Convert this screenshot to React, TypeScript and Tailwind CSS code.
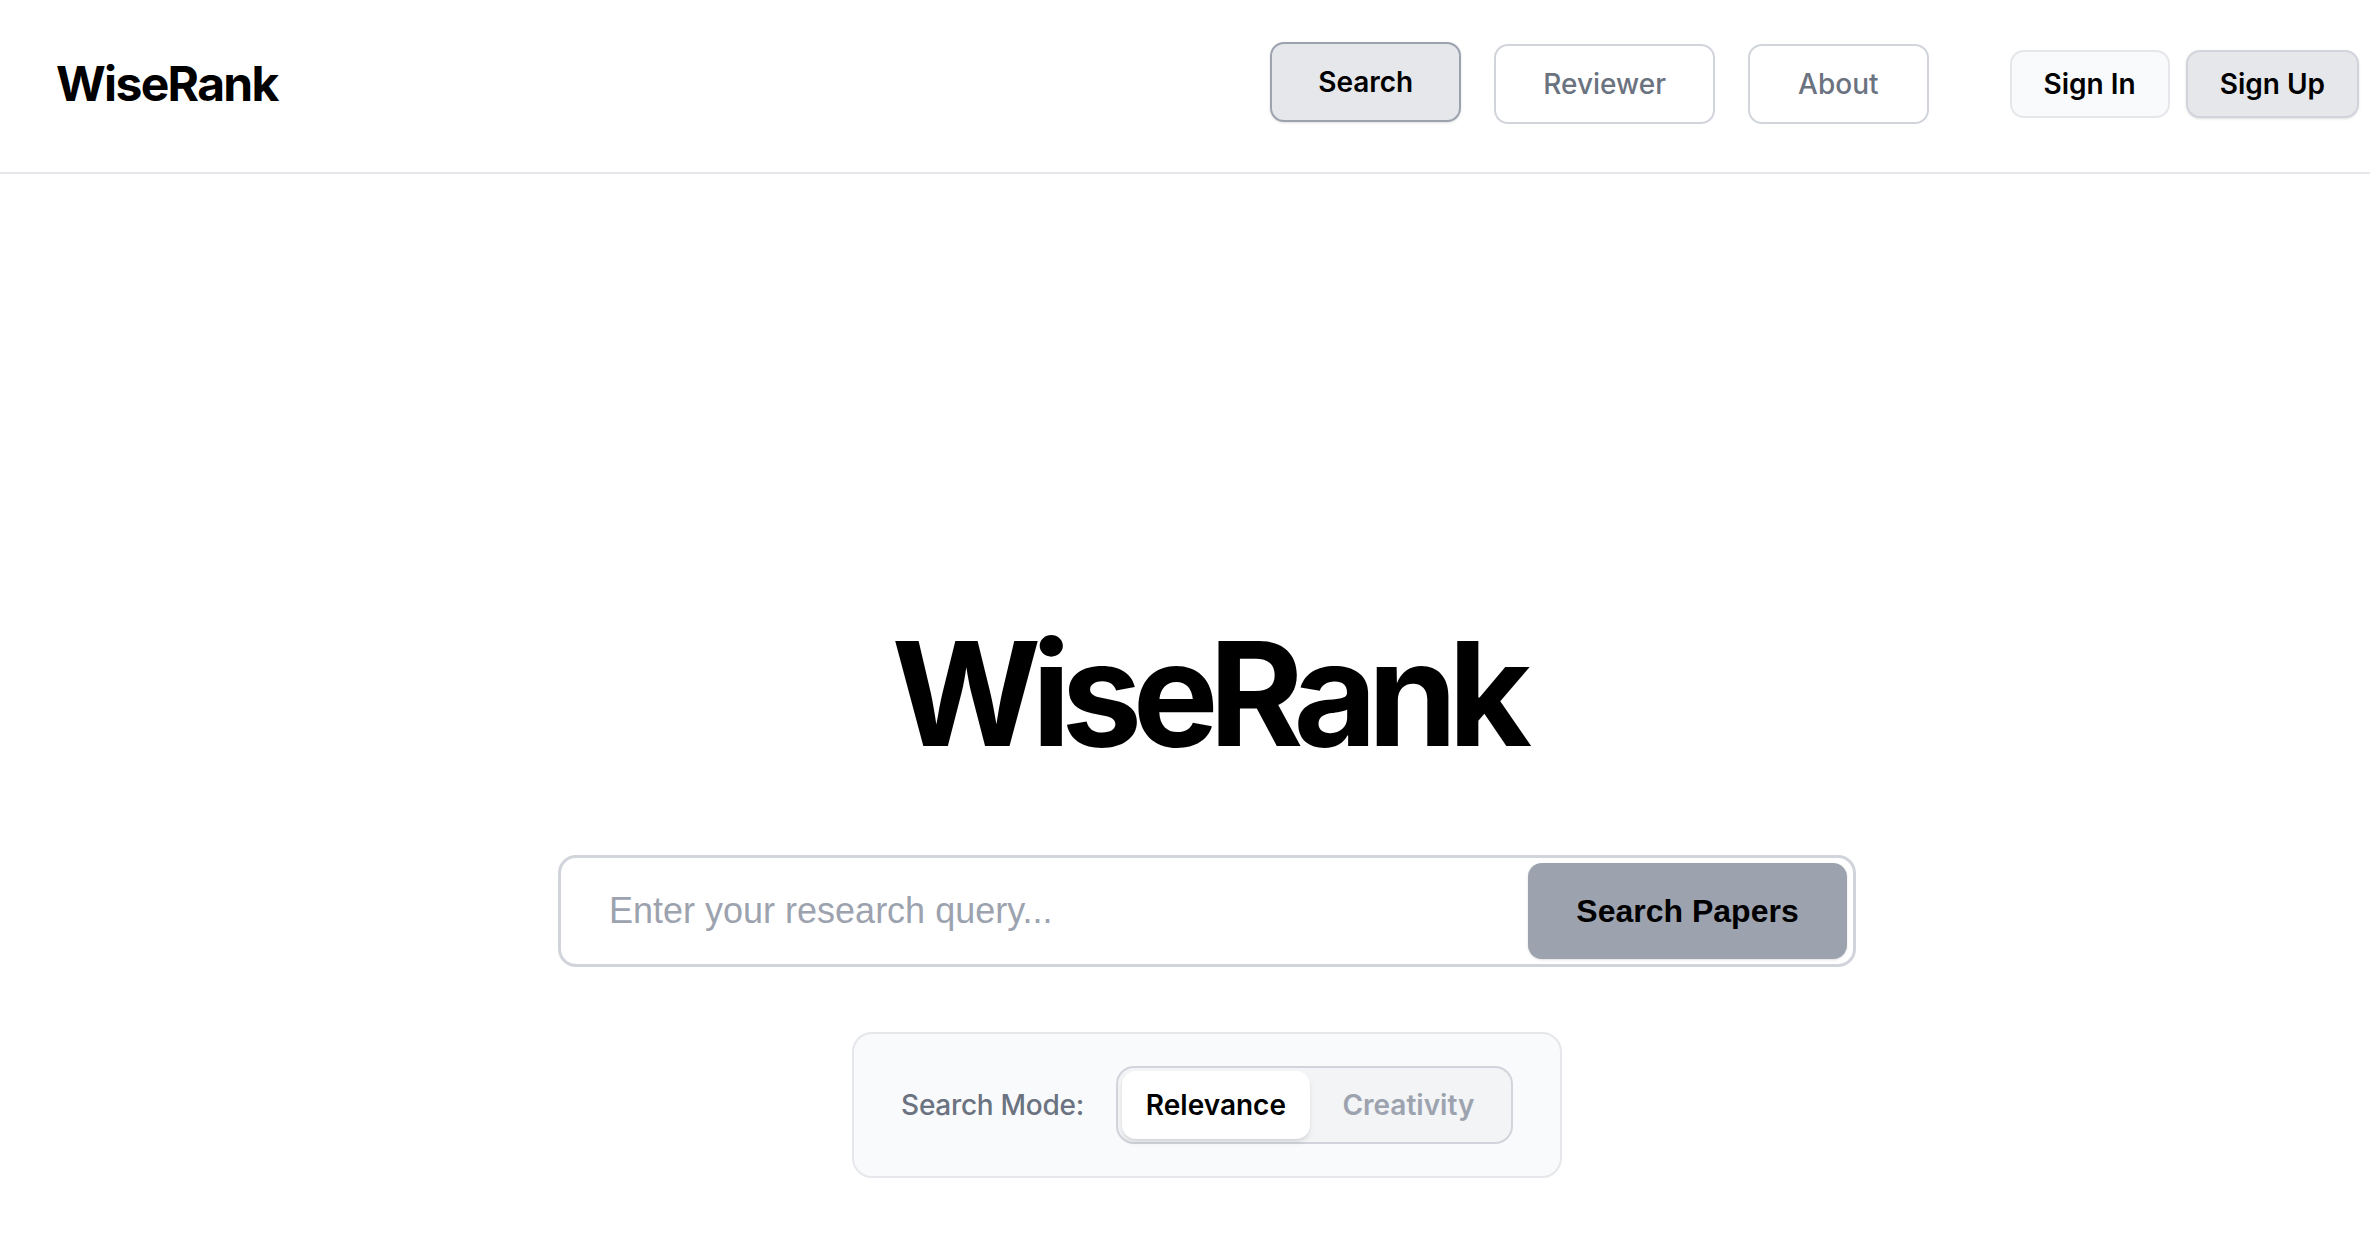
import React, { useState } from "react";

export default function App() {
  const [mode, setMode] = useState<"relevance" | "creativity">("relevance");
  return (
    <div className="min-h-screen w-full bg-white text-black" style={{ fontFamily: "Inter, 'Noto Sans', sans-serif" }}>
      <header className="flex h-[174px] items-center border-b-2 border-[#e5e7eb] pb-[4px] pl-[56px] pr-[11px]">
        <div className="text-[48px] font-bold tracking-[-0.035em] leading-none">WiseRank</div>
        <div className="flex-1" />
        <nav className="flex items-center gap-[33px]">
          <button className="h-[80px] -translate-y-[2px] rounded-[14px] border-2 border-[#9ca3af] bg-[#e5e7eb] px-[46px] text-[28px] font-semibold text-black shadow-sm">
            Search
          </button>
          <button className="h-[80px] rounded-[14px] border-2 border-[#d1d5db] bg-white px-[47px] text-[28px] font-medium text-[#6b7280]">
            Reviewer
          </button>
          <button className="h-[80px] rounded-[14px] border-2 border-[#d1d5db] bg-white px-[48px] text-[28px] font-medium text-[#6b7280]">
            About
          </button>
        </nav>
        <div className="ml-[81px] flex items-center gap-[16px]">
          <button className="h-[68px] rounded-[14px] border-2 border-[#e5e7eb] bg-[#f9fafb] px-[32px] text-[28px] font-semibold text-black">
            Sign In
          </button>
          <button className="h-[68px] rounded-[14px] border-2 border-[#d1d5db] bg-[#e5e7eb] px-[32px] text-[28px] font-semibold text-black shadow-sm">
            Sign Up
          </button>
        </div>
      </header>

      <main className="flex flex-col items-center pl-[44px] pt-[448px]">
        <h1 className="text-[144px] font-bold leading-none tracking-[-0.065em]">WiseRank</h1>

        <div className="mt-[89px] flex h-[112px] w-[1298px] items-center rounded-[18px] border-[3px] border-[#d1d5db] bg-white py-[5px] pl-[48px] pr-[6px]">
          <input
            className="h-full flex-1 bg-transparent text-[36px] text-black placeholder:text-[#9ca3af] outline-none"
            style={{ fontFamily: "'Liberation Sans', Arial, sans-serif" }}
            placeholder="Enter your research query..."
          />
          <button
            className="h-[96px] w-[319px] rounded-[14px] bg-[#9ca3af] text-[32px] font-bold text-black shadow-sm"
            style={{ fontFamily: "'Liberation Sans', Arial, sans-serif" }}
          >
            Search Papers
          </button>
        </div>

        <div className="mt-[65px] flex items-center gap-[32px] rounded-[20px] border-2 border-[#e5e7eb] bg-[#f9fafb] px-[47px] py-[32px]">
          <span className="text-[28px] font-medium tracking-[-0.01em] text-[#6b7280]">Search Mode:</span>
          <div className="flex h-[78px] items-center rounded-[18px] border-2 border-[#d1d5db] bg-[#f3f4f6] p-[4px]">
            <button
              onClick={() => setMode("relevance")}
              className={
                mode === "relevance"
                  ? "h-[68px] w-[188px] rounded-[14px] bg-white text-[28px] font-semibold text-black shadow-md"
                  : "h-[68px] w-[188px] rounded-[14px] text-[28px] font-semibold text-[#9ca3af]"
              }
            >
              Relevance
            </button>
            <button
              onClick={() => setMode("creativity")}
              className={
                mode === "creativity"
                  ? "h-[68px] w-[197px] rounded-[14px] bg-white text-[28px] font-semibold text-black shadow-md"
                  : "h-[68px] w-[197px] rounded-[14px] text-[28px] font-semibold text-[#9ca3af]"
              }
            >
              Creativity
            </button>
          </div>
        </div>
      </main>
    </div>
  );
}
